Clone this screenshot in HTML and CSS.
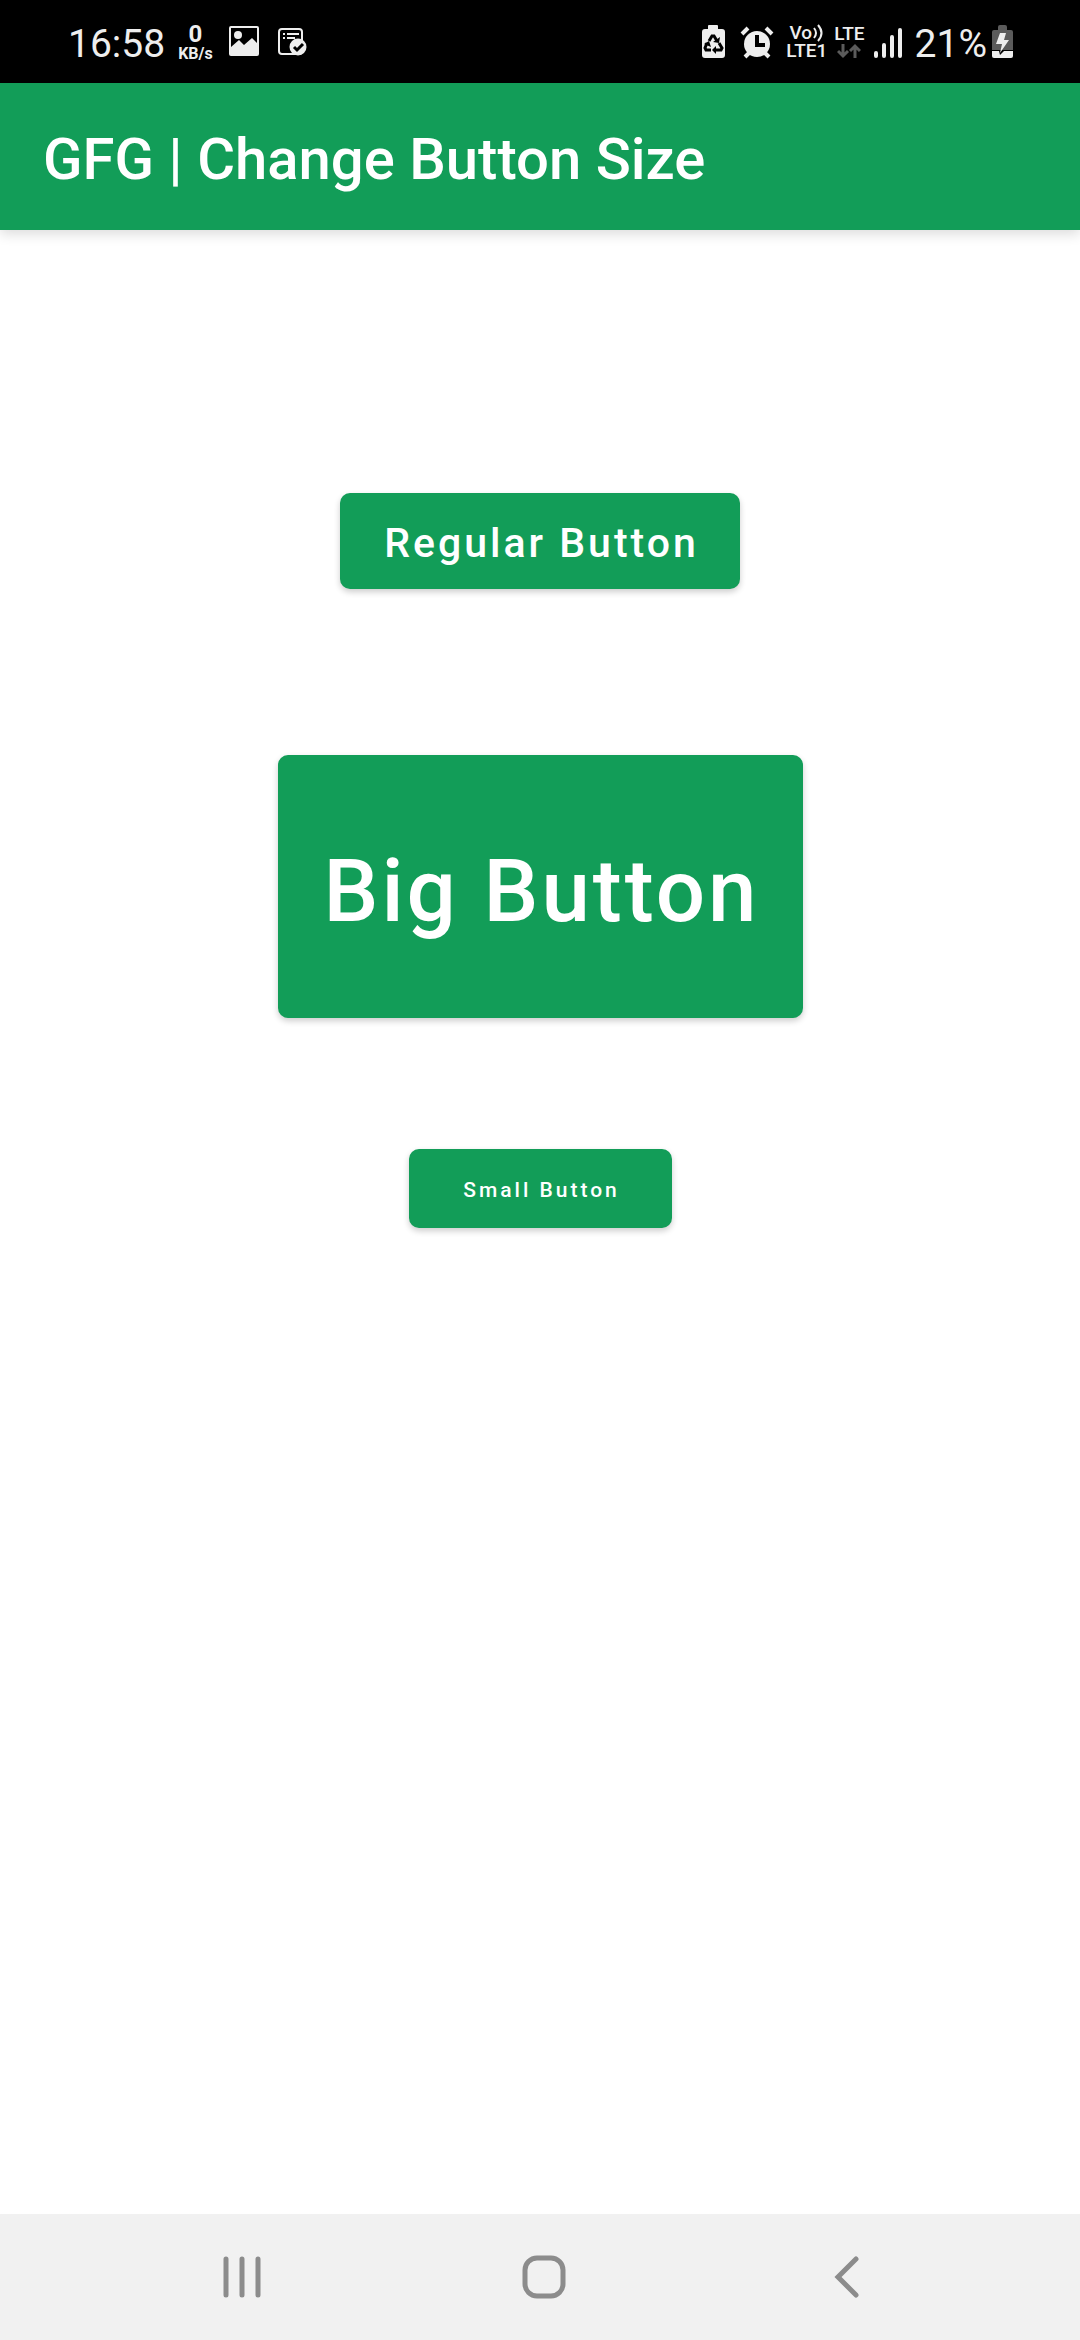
FILE: index.html
```html
<!DOCTYPE html>
<html lang="en">
<head>
<meta charset="utf-8">
<meta name="viewport" content="width=device-width, initial-scale=1">
<title>GFG | Change Button Size</title>
<link rel="stylesheet" href="styles.css">
</head>
<body>
<div class="screen">
  <div class="status">
    <div class="status-left">
      <span class="clock">16:58</span>
      <span class="speed"><span class="speed-value">0</span><span class="speed-unit">KB/s</span></span>
      <svg width="36" height="36" viewBox="0 0 36 36" aria-hidden="true">
        <path fill="#eee" fill-rule="evenodd" d="M5 2h26a2 2 0 0 1 2 2v26a2 2 0 0 1-2 2H5a2 2 0 0 1-2-2V4a2 2 0 0 1 2-2zM5 4v19l8-7 5 5 8-7 5 5V4z"/>
        <circle cx="12" cy="11" r="4" fill="#eee"/>
      </svg>
      <svg width="36" height="36" viewBox="0 0 36 36" aria-hidden="true">
        <rect x="4" y="5" width="23" height="25" rx="3" fill="none" stroke="#eee" stroke-width="2"/>
        <path d="M8 10h2M12 10h12M8 14h2M12 14h8" fill="none" stroke="#eee" stroke-width="2"/>
        <circle cx="23" cy="23" r="8.5" fill="#eee"/>
        <path d="M19 23l3 3 6-6" fill="none" stroke="#000" stroke-width="3"/>
      </svg>
    </div>
    <div class="status-right">
      <svg width="36" height="36" viewBox="0 0 36 36" aria-hidden="true">
        <path fill="#eee" d="M12 5V2q0-1 1-1h8q1 0 1 1v3h4q3 0 3 3v23q0 3-3 3H9q-3 0-3-3V8q0-3 3-3z"/>
        <path d="M13 17l3-5h2l3 5M11 19l-2 5 1 2h5M19 26h6l1-2-3-5" fill="none" stroke="#000" stroke-width="3"/>
        <path fill="#000" d="M17 18l6 1 1-6zM8 20l5-3 2 6zM16 26l4-4v8z"/>
      </svg>
      <svg width="40" height="36" viewBox="0 0 40 36" aria-hidden="true">
        <circle cx="18" cy="20" r="13" fill="#eee"/>
        <path d="M3 10l6-6M27 4l6 6M10 29l-4 4M26 29l4 4" fill="none" stroke="#eee" stroke-width="4"/>
        <path d="M18 11v10h8" fill="none" stroke="#000" stroke-width="4"/>
      </svg>
      <span class="volte">
        <span class="vo">Vo<svg width="12" height="18" viewBox="0 0 12 18" aria-hidden="true"><path d="M2 4q4 5 0 10M6 1q7 8 0 16" fill="none" stroke="#eee" stroke-width="2"/></svg></span>
        <span>LTE1</span>
      </span>
      <span class="lte">
        <span>LTE</span>
        <svg width="24" height="16" viewBox="0 0 24 16" aria-hidden="true"><path d="M6 1v12M1 8l5 5 5-5M18 15V3M13 8l5-5 5 5" fill="none" stroke="#5b5b5b" stroke-width="3"/></svg>
      </span>
      <svg width="36" height="36" viewBox="0 0 36 36" aria-hidden="true">
        <path d="M4 29v3M12 21v11M20 13v19M28 6v26" fill="none" stroke="#eee" stroke-width="4" stroke-linecap="round"/>
      </svg>
      <span class="power">
        <span class="percent">21%</span>
        <svg width="24" height="36" viewBox="0 0 24 36" aria-hidden="true">
          <path fill="#5b5b5b" d="M8 6V3q0-2 2-2h5q2 0 2 2v3h4q2 0 2 2v18H2V8q0-2 2-2z"/>
          <path fill="#eee" d="M2 27h21v5q0 2-2 2H4q-2 0-2-2z"/>
          <path fill="#000" d="M9 27h5l-4 4z"/>
          <path fill="#eee" d="M10 9h6l-2 7h5l-9 13 2-9H6z"/>
        </svg>
      </span>
    </div>
  </div>
  <header class="app-bar"><h1>GFG | Change Button Size</h1></header>
  <main class="content">
    <button class="btn regular" type="button">Regular Button</button>
    <button class="btn big" type="button">Big Button</button>
    <button class="btn small" type="button">Small Button</button>
  </main>
  <nav class="nav">
    <button type="button" aria-label="Recent apps"><svg width="48" height="48" viewBox="0 0 48 48"><path d="M8 6v36M24 6v36M40 6v36" stroke-width="5"/></svg></button>
    <button type="button" aria-label="Home"><svg width="48" height="48" viewBox="0 0 48 48"><rect x="5" y="5" width="38" height="38" rx="12" stroke-width="5"/></svg></button>
    <button type="button" aria-label="Back"><svg width="48" height="48" viewBox="0 0 48 48"><path d="M34 6L16 24l18 18" stroke-width="5"/></svg></button>
  </nav>
</div>
</body>
</html>
```

FILE: styles.css
```css
* { box-sizing: border-box; }

body {
  margin: 0;
  background: #fff;
  font-family: Roboto, "Liberation Sans", sans-serif;
}

svg { display: block; flex: none; }

.screen {
  display: flex;
  flex-direction: column;
  min-height: 100vh;
}

.status {
  display: flex;
  justify-content: space-between;
  align-items: center;
  height: 83px;
  padding: 0 66px 0 68px;
  background: #000;
  color: #eee;
}

.status-left, .status-right, .power { display: flex; align-items: center; }
.status-left { gap: 13px; }
.status-right { gap: 7px; }
.power { gap: 3px; }
.clock, .percent { padding-top: 4px; font-size: 39px; line-height: 48px; }

.speed, .volte, .lte {
  display: flex;
  flex-direction: column;
  align-items: center;
}

.speed { font-weight: 700; }
.speed-value { font-size: 24px; line-height: 24px; }
.speed-unit { font-size: 16px; line-height: 16px; }
.volte, .lte { font-size: 19px; line-height: 18px; font-weight: 500; }
.vo { display: flex; }

.app-bar {
  position: relative;
  padding: 39px 43px 33px;
  background: #129d58;
  color: #fff;
  box-shadow: 0 4px 12px rgba(0, 0, 0, 0.14);
}

.app-bar h1 {
  margin: 0;
  font-size: 58px;
  line-height: 75px;
  font-weight: 500;
}

.content {
  flex: 1;
  display: flex;
  flex-direction: column;
  align-items: center;
  padding-top: 263px;
}

.btn {
  border: 0;
  border-radius: 10px;
  background: #129d58;
  color: #fff;
  font-family: inherit;
  font-weight: 500;
  letter-spacing: 3px;
  box-shadow: 0 3px 6px rgba(0, 0, 0, 0.2);
}

.regular { width: 400px; height: 96px; padding: 4px 0 0 3px; font-size: 41px; }
.big { width: 525px; height: 263px; margin-top: 166px; padding: 8px 0 0 3px; font-size: 87px; }
.small { width: 263px; height: 79px; margin-top: 131px; padding: 2px 0 0 3px; font-size: 21px; }

.nav {
  display: flex;
  justify-content: center;
  gap: 254px;
  padding: 39px 0 39px 8px;
  background: #f1f1f1;
}

.nav button { padding: 0; border: 0; background: none; }
.nav svg {
  fill: none;
  stroke: #8c8c8c;
  stroke-linecap: round;
}
```
